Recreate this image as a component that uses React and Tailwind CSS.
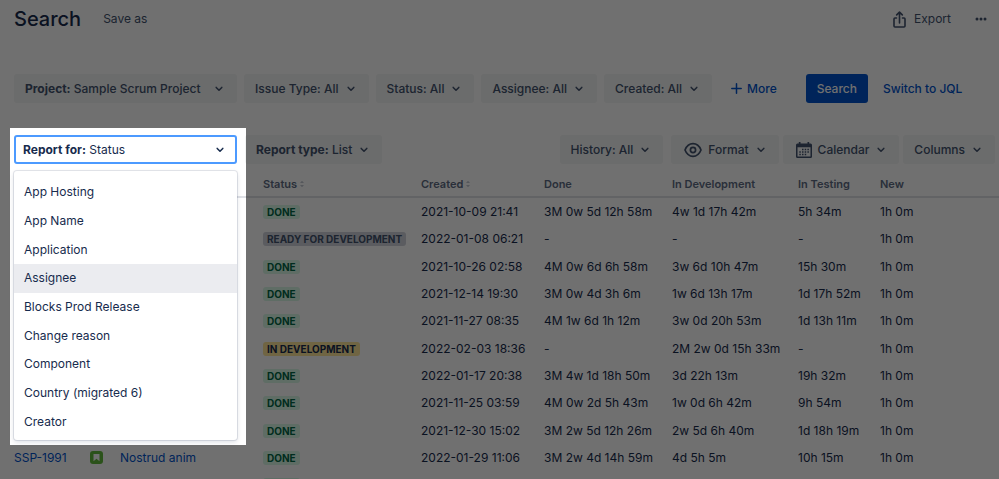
import React, { useState } from 'react';

const filters = [
  { label: 'Project:', value: 'Sample Scrum Project', strong: true },
  { label: 'Issue Type:', value: 'All' },
  { label: 'Status:', value: 'All' },
  { label: 'Assignee:', value: 'All' },
  { label: 'Created:', value: 'All' },
];

const fields = [
  'App Hosting',
  'App Name',
  'Application',
  'Assignee',
  'Blocks Prod Release',
  'Change reason',
  'Component',
  'Country (migrated 6)',
  'Creator',
];

const issues = [
  { key: 'SSP-2000', summary: 'Lorem ipsum', status: 'DONE', created: '2021-10-09 21:41', times: ['3M 0w 5d 12h 58m', '4w 1d 17h 42m', '5h 34m', '1h 0m'] },
  { key: 'SSP-1999', summary: 'Dolor sit', status: 'READY FOR DEVELOPMENT', created: '2022-01-08 06:21', times: ['-', '-', '-', '1h 0m'] },
  { key: 'SSP-1998', summary: 'Amet elit', status: 'DONE', created: '2021-10-26 02:58', times: ['4M 0w 6d 6h 58m', '3w 6d 10h 47m', '15h 30m', '1h 0m'] },
  { key: 'SSP-1997', summary: 'Sed eiusmod', status: 'DONE', created: '2021-12-14 19:30', times: ['3M 0w 4d 3h 6m', '1w 6d 13h 17m', '1d 17h 52m', '1h 0m'] },
  { key: 'SSP-1996', summary: 'Tempor ut', status: 'DONE', created: '2021-11-27 08:35', times: ['4M 1w 6d 1h 12m', '3w 0d 20h 53m', '1d 13h 11m', '1h 0m'] },
  { key: 'SSP-1995', summary: 'Labore et', status: 'IN DEVELOPMENT', created: '2022-02-03 18:36', times: ['-', '2M 2w 0d 15h 33m', '-', '1h 0m'] },
  { key: 'SSP-1994', summary: 'Magna aliqua', status: 'DONE', created: '2022-01-17 20:38', times: ['3M 4w 1d 18h 50m', '3d 22h 13m', '19h 32m', '1h 0m'] },
  { key: 'SSP-1993', summary: 'Enim minim', status: 'DONE', created: '2021-11-25 03:59', times: ['4M 0w 2d 5h 43m', '1w 0d 6h 42m', '9h 54m', '1h 0m'] },
  { key: 'SSP-1992', summary: 'Quis veniam', status: 'DONE', created: '2021-12-30 15:02', times: ['3M 2w 5d 12h 26m', '2w 5d 6h 40m', '1d 18h 19m', '1h 0m'] },
  { key: 'SSP-1991', summary: 'Nostrud anim', status: 'DONE', created: '2022-01-29 11:06', times: ['3M 2w 4d 14h 59m', '4d 5h 5m', '10h 15m', '1h 0m'] },
  { key: 'SSP-1990', summary: 'Ullamco nisi', status: 'DONE', created: '2022-01-12 09:14', times: ['3M 1w 2d 10h 21m', '1w 2d 4h 8m', '12h 40m', '1h 0m'] },
];

const statusColors = {
  DONE: 'bg-[#d8f8e6] text-[#006644]',
  'READY FOR DEVELOPMENT': 'bg-[#cfd2da] text-[#42526e]',
  'IN DEVELOPMENT': 'bg-[#ffe59a] text-[#172b4d]',
};

const Chevron = () => (
  <svg viewBox="0 0 8 6" className="w-2 h-[6px] shrink-0" fill="none" stroke="currentColor" strokeWidth="1.5" strokeLinecap="round" strokeLinejoin="round">
    <path d="M1.200 1.400 4 4.300 6.800 1.400" />
  </svg>
);

const ExportIcon = () => (
  <svg viewBox="0 0 13 17" className="w-[13px] h-[17px]" fill="none" stroke="currentColor" strokeWidth="1.6" strokeLinecap="round" strokeLinejoin="round">
    <path d="M3.500 7H1.900Q1 7 1 8v7q0 1 1 1h9q1 0 1-1V8q0-1-.9-1H9.500" />
    <path d="M6.500 12V1.200M3.700 3.900l2.800-2.800 2.800 2.800" />
  </svg>
);

const EyeIcon = () => (
  <svg viewBox="0 0 18 16" className="w-[18px] h-4" fill="none" stroke="currentColor" strokeWidth="1.7">
    <path d="M1 8c1.600-4 4.500-6.300 8-6.300S15.400 4 17 8c-1.600 4-4.500 6.300-8 6.300S2.600 12 1 8Z" strokeLinejoin="round" />
    <circle cx="9" cy="8" r="2.600" />
  </svg>
);

const CalendarIcon = () => (
  <svg viewBox="0 0 16 16" className="w-4 h-4" fill="currentColor">
    <path fillRule="evenodd" d="M2.800 0h1.700v1.500h7V0h1.700v1.500h1.300Q16 1.500 16 3v11.500q0 1.500-1.500 1.500h-13Q0 16 0 14.500V3q0-1.500 1.500-1.500h1.300ZM1.500 5.200v9.300h13V5.200Z" />
    <path d="M6 6.700h1.500v1.500H6zM8.700 6.700h1.500v1.500H8.700zM11.400 6.700h1.500v1.500h-1.500zM3.300 9.200h1.500v1.500H3.300zM6 9.200h1.500v1.500H6zM8.700 9.200h1.500v1.500H8.700zM11.400 9.200h1.500v1.500h-1.500zM3.300 11.700h1.500v1.500H3.300zM6 11.700h1.500v1.500H6zM8.700 11.700h1.500v1.500H8.700z" />
  </svg>
);

const SortIcon = () => (
  <svg viewBox="0 0 6 8" className="w-[6px] h-2" fill="#c1c7d0">
    <path d="M3 .8 5 3H1ZM3 7.200 1 5h4Z" />
  </svg>
);

const StoryIcon = () => (
  <svg viewBox="0 0 13 13" className="w-[13px] h-[13px]">
    <rect width="13" height="13" rx="3" fill="#63ba3c" />
    <path d="M3.500 3h6v7.300L6.500 7.700l-3 2.600Z" fill="white" />
  </svg>
);

const DropButton = ({ children, className = 'pl-[11px]' }) => (
  <button className={`flex items-center justify-between h-[29px] gap-2 pr-[14px] rounded-[3px] bg-[#f3f5f5] font-medium text-[#42526e] whitespace-nowrap ${className}`}>
    <span className="flex items-center gap-[6px]">{children}</span>
    <Chevron />
  </button>
);

const App = () => {
  const [field, setField] = useState('Status');
  const [open, setOpen] = useState(true);

  const selectField = (name) => {
    setField(name);
    setOpen(false);
  };

  return (
    <div className="relative h-screen overflow-hidden bg-white font-['Inter',sans-serif] text-xs leading-5 text-[#172b4d]">
      <header className="flex items-center h-[38px] pl-[14px] pr-3">
        <h1 className="text-xl font-medium">Search</h1>
        <button className="ml-[22px] text-[#42526e]">Save as</button>
        <button className="flex items-center gap-2 ml-auto text-[#42526e]">
          <ExportIcon />
          Export
        </button>
        <button aria-label="More actions" className="ml-6 text-[#42526e]">
          <svg viewBox="0 0 12 4" className="w-3 h-1" fill="currentColor">
            <circle cx="2" cy="2" r="1.500" />
            <circle cx="6" cy="2" r="1.500" />
            <circle cx="10" cy="2" r="1.500" />
          </svg>
        </button>
      </header>

      <div className="flex items-center gap-[7px] mt-9 pl-[14px]">
        {filters.map((filter) => (
          <DropButton key={filter.label} className={filter.strong ? 'pl-[11px] min-w-[223px]' : 'pl-[11px]'}>
            <span>
              <span className={filter.strong ? 'font-bold' : ''}>{filter.label}</span> {filter.value}
            </span>
          </DropButton>
        ))}
        <button className="flex items-center gap-[5px] ml-3 font-medium text-[#0052cc]">
          <svg viewBox="0 0 11 11" className="w-[11px] h-[11px]" stroke="currentColor" strokeWidth="1.500" strokeLinecap="round">
            <path d="M5.500 .8v9.400M.8 5.500h9.400" />
          </svg>
          More
        </button>
        <button className="h-[29px] ml-[22px] px-[11px] rounded-[3px] bg-[#0052cc] font-medium text-white">Search</button>
        <a href="#jql" className="ml-2 font-medium text-[#0052cc] whitespace-nowrap">Switch to JQL</a>
      </div>

      <div className="flex items-center mt-8 pl-[14px] pr-1">
        <div className="relative z-10 w-[223px]">
          {/* spotlight that dims the rest of the page */}
          <div className="absolute -left-1 -top-[7px] w-[236px] h-[317px] shadow-[0_0_0_2000px_rgba(0,0,0,0.56)] pointer-events-none" />
          <button
            onClick={() => setOpen(!open)}
            aria-expanded={open}
            className="relative flex items-center justify-between w-full h-[29px] pl-[7px] pr-[11px] rounded-[3px] border-2 border-[#4c9aff] bg-white"
          >
            <span>
              <span className="font-bold">Report for:</span> {field}
            </span>
            <Chevron />
          </button>
          {open && (
            <div className="absolute left-0 top-9 w-full pt-[7px] pb-1 rounded-[3px] bg-white shadow-[0_0_0_1px_rgba(9,30,66,0.1),0_2px_5px_rgba(9,30,66,0.15)]">
              <ul className="grid auto-rows-fr h-[258px]">
                {fields.map((name) => (
                  <li key={name} className="flex">
                    <button
                      onClick={() => selectField(name)}
                      className={`w-full px-[10px] text-left ${name === 'Assignee' ? 'bg-[#ebecf0]' : 'bg-white'}`}
                    >
                      {name}
                    </button>
                  </li>
                ))}
              </ul>
            </div>
          )}
        </div>
        <div className="ml-2">
          <DropButton>
            <span>
              <span className="font-bold">Report type:</span> List
            </span>
          </DropButton>
        </div>
        <div className="flex gap-1 ml-auto">
          <div className="mr-1">
            <DropButton>History: All</DropButton>
          </div>
          <DropButton className="pl-[13px]">
            <EyeIcon />
            Format
          </DropButton>
          <DropButton className="pl-[13px]">
            <CalendarIcon />
            Calendar
          </DropButton>
          <DropButton>Columns</DropButton>
        </div>
      </div>

      <div className="mt-2 pl-[14px]">
        <table className="w-full h-[327px] table-fixed text-left whitespace-nowrap">
          <colgroup>
            <col className="w-[76px]" />
            <col className="w-[30px]" />
            <col className="w-[143px]" />
            <col className="w-[158px]" />
            <col className="w-[123px]" />
            <col className="w-[128px]" />
            <col className="w-[126px]" />
            <col className="w-[82px]" />
            <col />
          </colgroup>
          <thead>
            <tr className="h-[25px] border-b-2 border-[#dfe1e6] text-[11px] text-[#5e6c84]">
              <th className="font-semibold">Key</th>
              <th className="font-semibold">T</th>
              <th className="font-semibold">Summary</th>
              <th className="font-semibold">
                <span className="flex items-center gap-[2px]">Status<SortIcon /></span>
              </th>
              <th className="font-semibold">
                <span className="flex items-center gap-[2px]">Created<SortIcon /></span>
              </th>
              <th className="font-semibold">Done</th>
              <th className="font-semibold">In Development</th>
              <th className="font-semibold">In Testing</th>
              <th className="font-semibold">New</th>
            </tr>
          </thead>
          <tbody>
            {issues.map((issue) => (
              <tr key={issue.key}>
                <td><a href={`#${issue.key}`} className="text-[#0052cc]">{issue.key}</a></td>
                <td><StoryIcon /></td>
                <td><a href={`#${issue.key}`} className="text-[#0052cc]">{issue.summary}</a></td>
                <td>
                  <span className={`block w-fit px-1 rounded-[3px] text-[10px] leading-[14px] font-bold ${statusColors[issue.status]}`}>
                    {issue.status}
                  </span>
                </td>
                <td>{issue.created}</td>
                {issue.times.map((time, i) => (
                  <td key={i}>{time}</td>
                ))}
              </tr>
            ))}
          </tbody>
        </table>
      </div>
    </div>
  );
};

export default App;
